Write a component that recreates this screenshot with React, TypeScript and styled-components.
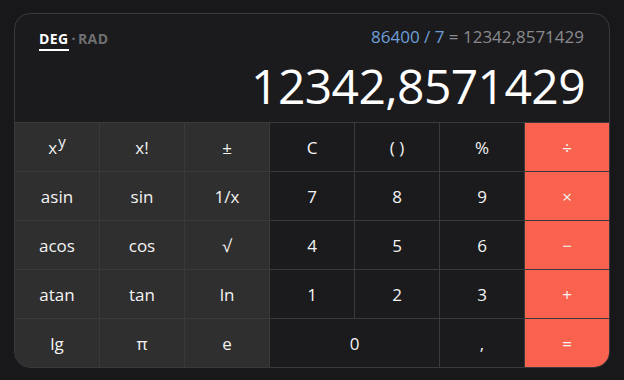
import styled, { createGlobalStyle } from "styled-components";

const GlobalStyle = createGlobalStyle`
  body {
    margin: 0;
    background: #18181a;
    font-family: "Open Sans", "Noto Sans", sans-serif;
  }
`;

const Card = styled.div`
  box-sizing: border-box;
  width: 596px;
  margin: 13px 0 0 14px;
  background: #1b1b1d;
  border: 1px solid #3a3a3c;
  border-radius: 16px;
  overflow: hidden;
`;

const Display = styled.div`
  display: flex;
  flex-direction: column;
  padding: 11px 24px 12px 24px;
`;

const TopRow = styled.div`
  display: flex;
  justify-content: space-between;
  align-items: flex-start;
  height: 24px;
`;

const Modes = styled.div`
  display: flex;
  align-items: flex-start;
  margin-top: 5px;
  font-size: 14px;
  line-height: 17px;
  font-weight: 700;
  letter-spacing: 0.4px;
`;

const Mode = styled.span<{ $active?: boolean }>`
  color: ${(p) => (p.$active ? "#ffffff" : "#6f6f72")};
  padding-bottom: 2px;
  border-bottom: 2px solid ${(p) => (p.$active ? "#ffffff" : "transparent")};
`;

const Dot = styled.span`
  color: #6f6f72;
  margin: 0 2px 0 3px;
`;

const Expression = styled.div`
  margin-right: 1px;
  font-size: 17px;
  line-height: 24px;
  color: #8a8a8e;
`;

const Input = styled.span`
  color: #6f9fd8;
`;

const Result = styled.div`
  margin-top: 13px;
  text-align: right;
  font-size: 48px;
  line-height: 48px;
  color: #ffffff;
  letter-spacing: -0.6px;
`;

const Keypad = styled.div`
  display: grid;
  grid-template-columns: repeat(7, 1fr);
  grid-auto-rows: 48px;
  gap: 1px;
  background: #3a3a3c;
  border-top: 1px solid #3a3a3c;
`;

type Kind = "fn" | "num" | "op";

const bg: Record<Kind, string> = {
  fn: "#2f2f2f",
  num: "#1b1b1d",
  op: "#f9624e",
};

const Key = styled.button<{ $kind: Kind; $span?: number }>`
  grid-column: span ${(p) => p.$span ?? 1};
  display: flex;
  align-items: center;
  justify-content: center;
  border: none;
  padding: 0;
  background: ${(p) => bg[p.$kind]};
  color: #f4f4f4;
  font-family: "Open Sans", "Noto Sans", sans-serif;
  font-size: 17px;
  cursor: pointer;
`;

const Sup = styled.span`
  display: inline-block;
  font-size: 15px;
  line-height: 1;
  transform: translateY(-6px);
  margin-left: 1px;
`;

const keys: { label: React.ReactNode; kind: Kind; span?: number }[] = [
  { label: <>x<Sup>y</Sup></>, kind: "fn" },
  { label: "x!", kind: "fn" },
  { label: "±", kind: "fn" },
  { label: "C", kind: "num" },
  { label: "( )", kind: "num" },
  { label: "%", kind: "num" },
  { label: "÷", kind: "op" },
  { label: "asin", kind: "fn" },
  { label: "sin", kind: "fn" },
  { label: "1/x", kind: "fn" },
  { label: "7", kind: "num" },
  { label: "8", kind: "num" },
  { label: "9", kind: "num" },
  { label: "×", kind: "op" },
  { label: "acos", kind: "fn" },
  { label: "cos", kind: "fn" },
  { label: "√", kind: "fn" },
  { label: "4", kind: "num" },
  { label: "5", kind: "num" },
  { label: "6", kind: "num" },
  { label: "−", kind: "op" },
  { label: "atan", kind: "fn" },
  { label: "tan", kind: "fn" },
  { label: "ln", kind: "fn" },
  { label: "1", kind: "num" },
  { label: "2", kind: "num" },
  { label: "3", kind: "num" },
  { label: "+", kind: "op" },
  { label: "lg", kind: "fn" },
  { label: "π", kind: "fn" },
  { label: "e", kind: "fn" },
  { label: "0", kind: "num", span: 2 },
  { label: ",", kind: "num" },
  { label: "=", kind: "op" },
];

const App = () => {
  return (
    <>
      <GlobalStyle />
      <Card>
        <Display>
          <TopRow>
            <Modes>
              <Mode $active>DEG</Mode>
              <Dot>·</Dot>
              <Mode>RAD</Mode>
            </Modes>
            <Expression>
              <Input>86400 / 7</Input> = 12342,8571429
            </Expression>
          </TopRow>
          <Result>12342,8571429</Result>
        </Display>
        <Keypad>
          {keys.map((k, i) => (
            <Key key={i} $kind={k.kind} $span={k.span}>
              {k.label}
            </Key>
          ))}
        </Keypad>
      </Card>
    </>
  );
};

export default App;
